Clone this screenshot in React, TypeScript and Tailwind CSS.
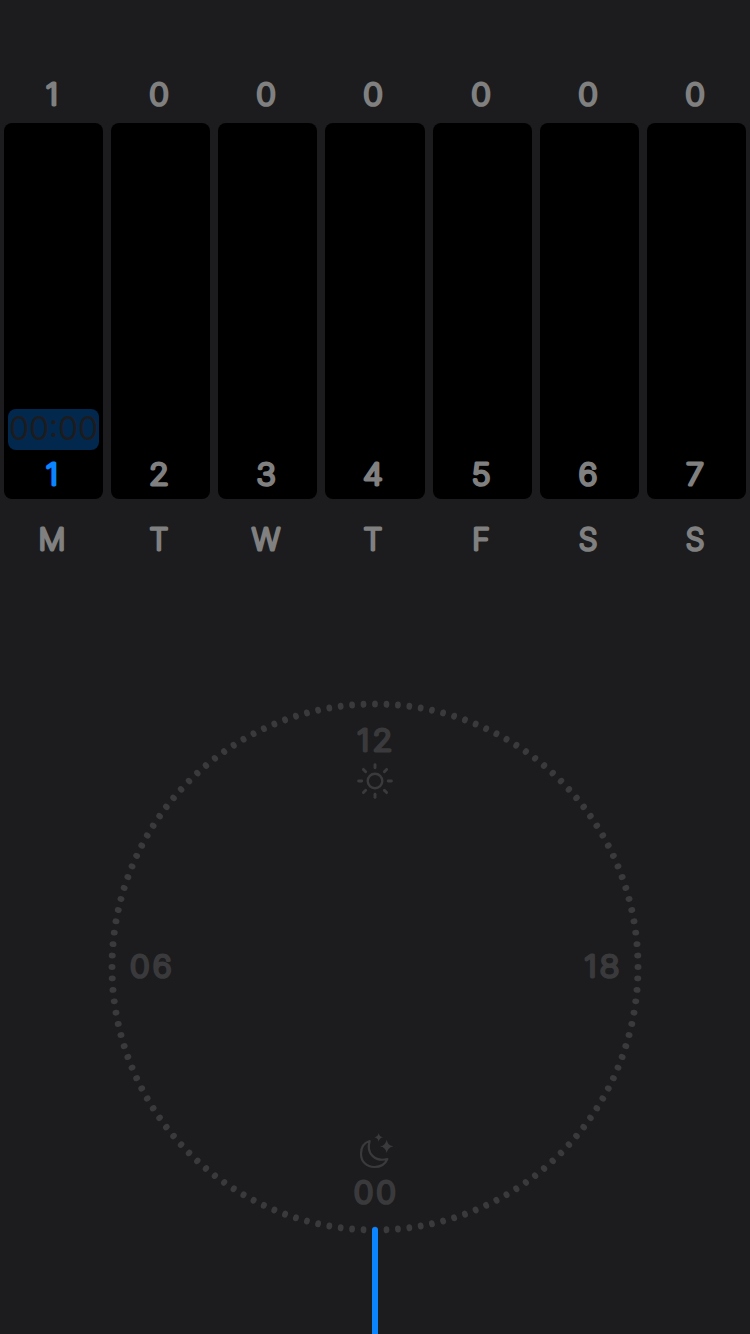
const days = [
  { count: 1, date: 1, name: 'M', active: true },
  { count: 0, date: 2, name: 'T', active: false },
  { count: 0, date: 3, name: 'W', active: false },
  { count: 0, date: 4, name: 'T', active: false },
  { count: 0, date: 5, name: 'F', active: false },
  { count: 0, date: 6, name: 'S', active: false },
  { count: 0, date: 7, name: 'S', active: false },
];

type LabelProps = { children: string | number; className?: string };

// Extra-light type with a round-joined outline, which gives soft stroke ends.
function RoundLabel({ children, className = '' }: LabelProps) {
  const text = String(children);
  const stretch = /\d/.test(text) ? 1.08 : 1;
  return (
    <svg className={`h-10 w-12 shrink-0 overflow-visible ${className}`} viewBox="-24 0 48 40">
      <text
        className="fill-current stroke-current font-['Inter',sans-serif] text-[30px] font-extralight"
        x={text.length > 1 ? 1.2 : 0}
        y="31"
        textAnchor="middle"
        letterSpacing={text.length > 1 ? 2.8 : 0}
        strokeWidth="3.1"
        strokeLinejoin="round"
        strokeLinecap="round"
        transform={`scale(${stretch} 1)`}
      >
        {text}
      </text>
    </svg>
  );
}

const TICKS = 144;

function Dial() {
  return (
    <svg className="absolute inset-0 size-full" viewBox="0 0 534 534" fill="#3a3a3c">
      {Array.from({ length: TICKS }, (_, i) => (
        <ellipse
          key={i}
          cx="267"
          cy="4"
          rx="2.9"
          ry="3.5"
          transform={`rotate(${(i * 360) / TICKS} 267 267)`}
        />
      ))}
    </svg>
  );
}

function Sun() {
  return (
    <svg className="mt-[3px] size-9" viewBox="-18 -18 36 36" fill="none" stroke="#3a3a3c" strokeLinecap="round">
      <circle r="7.3" strokeWidth="2.4" />
      {[0, 45, 90, 135, 180, 225, 270, 315].map((a) => (
        <path key={a} d="M0 -13.2V-16.4" strokeWidth="2.9" transform={`rotate(${a})`} />
      ))}
    </svg>
  );
}

function MoonStars() {
  return (
    <svg className="mb-[3px] h-9 w-9" viewBox="111 39 108 108" fill="#3a3a3c">
      <path
        d="M149 63C132 68 123 83 123 101C123 125 140 141 163 141C181 141 196 132 202 117C168 126 137 103 149 63Z"
        fill="none"
        stroke="#3a3a3c"
        strokeWidth="6.5"
        strokeLinejoin="round"
      />
      <path d="M176 39Q178 50 189 52Q178 54 176 65Q174 54 163 52Q174 50 176 39Z" />
      <path d="M200 59Q203 76 220 79Q203 82 200 99Q197 82 180 79Q197 76 200 59Z" />
    </svg>
  );
}

export default function App() {
  return (
    <main className="flex h-[1334px] w-[750px] flex-col items-center overflow-hidden bg-[#1c1c1e] text-[#808080]">
      <section className="grid w-full grid-cols-7 pt-[74px]">
        {days.map((day) => (
          <div key={day.date} className="flex flex-col items-center px-1">
            <RoundLabel className="-ml-[3px]">{day.count}</RoundLabel>
            <div className="mt-[9px] flex h-[376px] w-full flex-col items-center justify-end rounded-lg bg-black px-1 pb-[5px]">
              {day.active && (
                <div className="mb-1 flex h-[41px] w-full justify-center rounded-lg bg-[#03284d] font-['Inter',sans-serif] text-[32px] leading-10 tracking-[-0.2px] text-[#1c1c1e]">
                  00<span className="-mt-[3px]">:</span>00
                </div>
              )}
              <RoundLabel className={day.active ? '-ml-[3px] text-[#0a84ff]' : '-ml-[3px]'}>{day.date}</RoundLabel>
            </div>
            <RoundLabel className="mt-5 -ml-[3px]">{day.name}</RoundLabel>
          </div>
        ))}
      </section>

      <section className="relative mt-[141px] flex size-[534px] shrink-0 flex-col items-center justify-between pt-5 pb-[22px] text-[#3a3a3c]">
        <Dial />
        <div className="flex flex-col items-center">
          <RoundLabel>12</RoundLabel>
          <Sun />
        </div>
        <div className="flex w-full justify-between pr-[16px] pl-[19px]">
          <RoundLabel>06</RoundLabel>
          <RoundLabel>18</RoundLabel>
        </div>
        <div className="flex flex-col items-center">
          <MoonStars />
          <RoundLabel>00</RoundLabel>
        </div>
      </section>
      <div className="relative -mt-[7px] h-28 w-1.5 shrink-0 rounded-t-full bg-[#0a84ff]" />
    </main>
  );
}
